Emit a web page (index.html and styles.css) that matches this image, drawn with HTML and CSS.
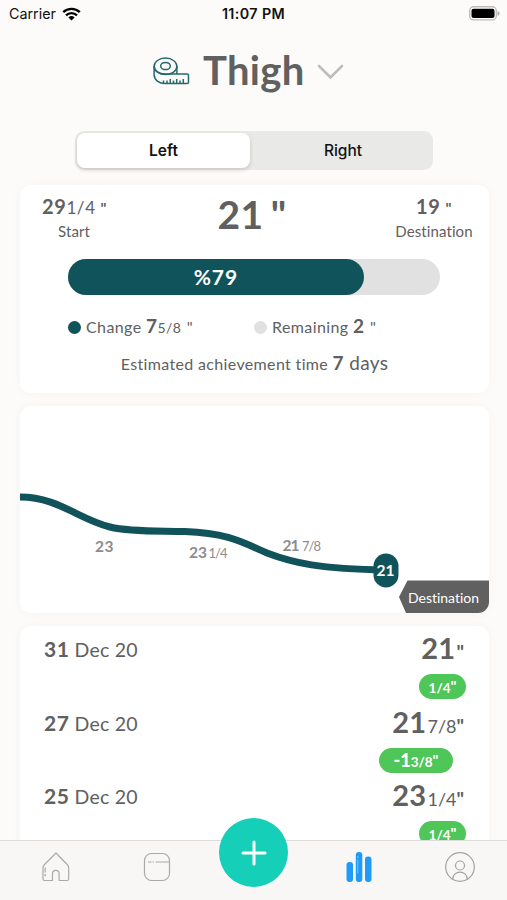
FILE: index.html
```html
<!DOCTYPE html>
<html lang="en">

<head>
    <meta charset="UTF-8">
    <meta name="viewport" content="width=device-width, initial-scale=1.0">
    <title>Thigh</title>
    <link rel="stylesheet" href="styles.css">
</head>

<body>
    <div class="statusbar">
        <div class="carrier">
            <span>Carrier</span>
            <svg width="19" height="14" viewBox="0 0 19 14">
                <path d="M1.2 5.2a12 12 0 0 1 16.6 0M4 8.3a8 8 0 0 1 11 0" fill="none" stroke="#000" stroke-width="2.4" />
                <path d="M9.5 13.6L6.4 10.4a4.6 4.6 0 0 1 6.2 0z" fill="#000" />
            </svg>
        </div>
        <span class="clock">11:07 PM</span>
        <svg class="battery" width="31" height="15" viewBox="0 0 31 15">
            <rect x=".7" y=".7" width="26.6" height="13.2" rx="4" fill="#fff" stroke="#bcbcbb" stroke-width="1.4" />
            <rect x="2.5" y="2.7" width="23" height="9.2" rx="2" fill="#000" />
            <path d="M28.6 5v5q2-.8 2-2.5t-2-2.5z" fill="#aaa" />
        </svg>
    </div>

    <header class="title">
        <svg class="tape" width="37" height="28" viewBox="0 0 37 28">
            <g fill="none" stroke="#25696c" stroke-width="1.5">
                <ellipse cx="12.5" cy="9.3" rx="11.4" ry="8.2" />
                <ellipse cx="12.5" cy="9" rx="4.8" ry="3.6" />
                <path d="M1.1 9v8.500c0 5.500 5 9 11 9h22q1.400 0 1.400-1.300v-7q0-1.300-1.400-1.300H13C6 16.900 1.100 14 1.100 9M23.900 9v8" />
                <path d="M10.500 26.500v-3M14 26.500v-3M17.300 26.500v-4.500M20.500 26.500v-3M23.700 26.500v-4.500M27 26.500v-3M30.300 26.500v-4.500" />
            </g>
        </svg>
        <h1>Thigh</h1>
        <svg class="chevron" width="27" height="16" viewBox="0 0 27 16">
            <path d="M2 2l11.500 11.500L25 2" fill="none" stroke="#bdbdbd" stroke-width="2.6" stroke-linecap="round" />
        </svg>
    </header>

    <div class="segment">
        <div class="option active">Left</div>
        <div class="option">Right</div>
    </div>

    <section class="card summary">
        <div class="values">
            <div class="value start">
                <p><b>29</b><span>1/4</span> <i>"</i></p>
                <small>Start</small>
            </div>
            <h2>21 "</h2>
            <div class="value goal">
                <p><b>19</b> <i>"</i></p>
                <small>Destination</small>
            </div>
        </div>
        <div class="progress">
            <div class="bar" style="width: 79.5%">%79</div>
        </div>
        <div class="legend">
            <div class="item"><span class="dot"></span>Change <b>7</b><small>5/8</small> <i>"</i></div>
            <div class="item"><span class="dot light"></span>Remaining <b>2</b> <i>"</i></div>
        </div>
        <p class="estimate">Estimated achievement time <span><b>7</b> days</span></p>
    </section>

    <section class="card chart">
        <svg width="469" height="207" viewBox="0 0 469 207">
            <path d="M0 91C38 91 58 113 90 121C112 126.500 145 124.500 165 125.500C207 127 222 136 247 147C273 157 300 163 366 164" fill="none" stroke="#11535a" stroke-width="7" />
            <rect x="353.5" y="147.500" width="25" height="34" rx="12.5" fill="#11535a" />
            <text class="point" x="356.500" y="169.500" textLength="18">21</text>
            <text class="label" x="75" y="146" textLength="18.5">23</text>
            <text class="label" x="169" y="151.500" textLength="18">23</text>
            <text class="label frac" x="188.500" y="151.500" textLength="19">1/4</text>
            <text class="label" x="262.500" y="145" textLength="17">21</text>
            <text class="label frac" x="282" y="145" textLength="19">7/8</text>
            <path d="M387.500 174.500H469V207H386L379 191z" fill="#606060" />
            <text class="flag" x="388" y="197" textLength="71">Destination</text>
        </svg>
    </section>

    <section class="card history">
        <div class="entry">
            <div class="date"><b>31</b> Dec 20</div>
            <div class="result">
                <p><b>21</b><i>"</i></p>
                <span class="badge">1/4<i>"</i></span>
            </div>
        </div>
        <div class="entry">
            <div class="date"><b>27</b> Dec 20</div>
            <div class="result">
                <p><b>21</b><span>7/8</span><i>"</i></p>
                <span class="badge wide"><b>-1</b>3/8<i>"</i></span>
            </div>
        </div>
        <div class="entry">
            <div class="date"><b>25</b> Dec 20</div>
            <div class="result">
                <p><b>23</b><span>1/4</span><i>"</i></p>
                <span class="badge">1/4<i>"</i></span>
            </div>
        </div>
    </section>

    <nav class="tabbar">
        <div class="tab">
            <svg width="28" height="30" viewBox="0 0 28 30" fill="none" stroke="#aaa" stroke-width="1.2" stroke-linejoin="round">
                <path d="M14 1L2.500 12.500Q1 14 1 16v11q0 1.500 1.500 1.500h8V21.500q0-3.200 3.300-3.200t3.300 3.200v7h8q1.600 0 1.600-1.500V16q0-2-1.500-3.500z" />
                <path d="M3.200 15.500v9" stroke-dasharray="5 1.500" />
            </svg>
        </div>
        <div class="tab">
            <svg width="28" height="30" viewBox="0 0 28 30" fill="none" stroke="#aaa" stroke-width="1.2">
                <rect x="1.500" y="1.500" width="25" height="27" rx="7" />
                <path d="M5 10h3.500M9.500 10h1.500M12.500 10h13.500" />
            </svg>
        </div>
        <div class="tab">
            <div class="add">
                <svg width="26" height="26" viewBox="0 0 26 26">
                    <path d="M13 2v22M2 13h22" stroke="#fff" stroke-width="3" stroke-linecap="round" />
                </svg>
            </div>
        </div>
        <div class="tab">
            <svg width="28" height="30" viewBox="0 0 28 30">
                <rect x="1.500" y="10" width="6.500" height="20" rx="3" fill="#1d9bf6" />
                <rect x="10.800" y="0" width="6.500" height="30" rx="3" fill="#1d9bf6" />
                <rect x="20" y="4.500" width="6.500" height="25.500" rx="3" fill="#1d9bf6" />
                <path d="M12.800 4v20" stroke="#7cc6fb" stroke-width="1" stroke-dasharray="2 1.500 14 9" />
            </svg>
        </div>
        <div class="tab">
            <svg width="30" height="30" viewBox="0 0 30 30" fill="none" stroke="#a2a2a2" stroke-width="1.2">
                <circle cx="15" cy="15" r="14.3" />
                <circle cx="15" cy="13.500" r="4.500" />
                <path d="M7.700 27.200c0-9.500 14.600-9.500 14.600 0" />
            </svg>
        </div>
    </nav>
</body>

</html>
```
FILE: styles.css
```css
* {
    margin: 0;
    padding: 0;
    box-sizing: border-box;
}

body {
    width: 507px;
    height: 900px;
    overflow: hidden;
    background: #fcfbf9;
    color: #606060;
    font-family: Lato, "Open Sans", sans-serif;
    font-variant-ligatures: none;
}

i {
    font-style: normal;
    font-weight: bold;
}

.statusbar {
    display: grid;
    grid-template-columns: 1fr auto 1fr;
    align-items: center;
    height: 27px;
    padding: 0 7px 0 9px;
    color: #111;
    font: 14.3px Inter, sans-serif;
}

.carrier {
    display: flex;
    align-items: center;
    gap: 6px;
}

.clock {
    padding-right: 2px;
    font-weight: 600;
    letter-spacing: .4px;
}

.battery {
    justify-self: end;
}

.title {
    display: flex;
    align-items: center;
    height: 88px;
    padding-left: 153px;
}

.title h1 {
    width: 101px;
    margin: -2px 0 0 13px;
    font-size: 40px;
    line-height: 50px;
    letter-spacing: .3px;
}

.chevron {
    margin: 2px 0 0 13px;
}

.segment {
    display: flex;
    width: 358px;
    height: 39px;
    margin: 15.5px 0 0 75px;
    padding: 2px;
    border-radius: 9px;
    background: #e9e9e8;
}

.option {
    flex: 1;
    padding-left: 5px;
    border-radius: 8px;
    color: #111;
    font: 500 15.5px/35px Inter, sans-serif;
    text-align: center;
}

.option.active {
    flex: 0 0 173px;
    padding-left: 0;
    background: #fff;
    box-shadow: 0 2px 4px rgba(0, 0, 0, .15);
    font-weight: 600;
}

.card {
    width: 469px;
    margin: 0 0 13px 20px;
    border-radius: 11px;
    background: #fff;
    box-shadow: 0 0 12px rgba(0, 0, 0, .03);
    overflow: hidden;
}

.summary {
    height: 208px;
    margin-top: 15.5px;
    padding-top: 8px;
}

.values {
    display: flex;
    justify-content: space-between;
    height: 66px;
    padding: 0 16px 0 22px;
}

.value {
    width: 78px;
    text-align: center;
}

.value p {
    font-size: 17px;
    line-height: 26px;
    letter-spacing: .6px;
    white-space: nowrap;
}

.value b {
    font-size: 20px;
}

.value i {
    font-size: 15px;
}

.value small {
    display: block;
    font-size: 15px;
    line-height: 20px;
    letter-spacing: .1px;
}

.values .start {
    width: 64px;
}

.values h2 {
    padding-left: 3px;
    font-size: 39px;
    line-height: 43px;
    letter-spacing: .5px;
    word-spacing: -3px;
}

.progress {
    width: 372px;
    height: 36px;
    margin-left: 48px;
    border-radius: 18px;
    background: #e1e1e1;
}

.bar {
    height: 36px;
    border-radius: 18px;
    background: #11535a;
    color: #fff;
    font-weight: bold;
    font-size: 21px;
    line-height: 35px;
    letter-spacing: .9px;
    text-align: center;
}

.legend {
    display: flex;
    height: 38px;
    margin: 12px 0 0 48px;
}

.item {
    width: 186px;
    font-size: 16px;
    line-height: 37px;
    letter-spacing: .4px;
    white-space: nowrap;
}

.item b,
.estimate b {
    font-size: 19px;
}

.item small {
    font-size: 14px;
}

.item i {
    margin-left: 1px;
    font-weight: normal;
}

.dot {
    display: inline-block;
    width: 13px;
    height: 13px;
    margin-right: 5px;
    border-radius: 50%;
    background: #11535a;
    vertical-align: -1px;
}

.dot.light {
    background: #e1e1e1;
}

.estimate {
    font-size: 16px;
    line-height: 36px;
    letter-spacing: .35px;
    text-align: center;
}

.estimate span {
    font-size: 19px;
}

.chart {
    height: 207px;
}

.chart svg {
    display: block;
}

.label {
    fill: #8c8c8c;
    font-weight: bold;
    font-size: 15.5px;
}

.frac {
    font-weight: normal;
    font-size: 13px;
}

.point {
    fill: #fff;
    font-weight: bold;
    font-size: 15.5px;
}

.flag {
    fill: #fff;
    font-size: 14px;
}

.history {
    height: 240px;
    margin-bottom: 0;
    border-radius: 11px 11px 0 0;
}

.entry {
    display: flex;
    justify-content: space-between;
    height: 73.5px;
    padding: 0 23px 0 24px;
}

.date {
    font-size: 19.5px;
    line-height: 46px;
    letter-spacing: .2px;
}

.date b {
    font-size: 21px;
    letter-spacing: .5px;
}

.result {
    display: flex;
    flex-direction: column;
    align-items: flex-end;
}

.result p {
    height: 48px;
    padding-right: 2px;
    font-size: 18px;
    line-height: 44px;
    white-space: nowrap;
}

.result p b {
    margin-right: 1px;
    font-size: 29px;
    letter-spacing: .3px;
}

.result p i {
    font-size: 19px;
}

.badge {
    width: 47px;
    height: 25px;
    border-radius: 13px;
    background: #4fc658;
    color: #fff;
    font-weight: bold;
    font-size: 13.5px;
    line-height: 25px;
    text-align: center;
}

.badge i {
    font-size: 15px;
    vertical-align: 1px;
}

.badge.wide {
    width: 74px;
    margin-right: 13px;
}

.badge b {
    font-size: 18px;
}

.tabbar {
    position: absolute;
    left: 0;
    bottom: 0;
    display: flex;
    width: 507px;
    height: 60px;
    padding-left: 5px;
    border-top: 1px solid #dcdcdb;
    background: #f8f7f6;
}

.tab {
    display: flex;
    flex: 0 0 101px;
    justify-content: center;
    padding-top: 11px;
}

.add {
    display: flex;
    align-items: center;
    justify-content: center;
    flex: none;
    width: 69px;
    height: 69px;
    margin: -34px 8px 0 0;
    border-radius: 50%;
    background: #15cfb9;
}
```
